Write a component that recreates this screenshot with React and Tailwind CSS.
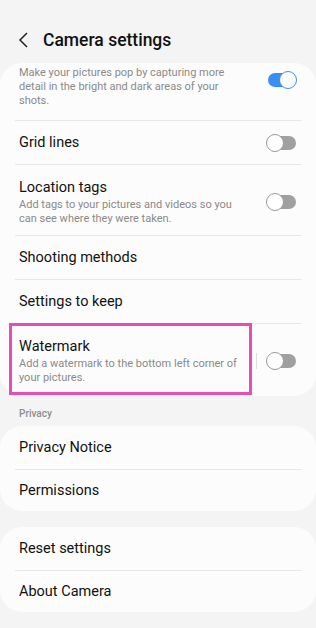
import React from 'react';

function Toggle({ on }) {
  return (
    <div className="relative h-[16px] w-[30px] shrink-0">
      <div
        className={`absolute left-[2px] right-0 top-[1px] h-[14px] rounded-full ${
          on ? 'bg-[#3b8ef5]' : 'bg-[#a0a0a0]'
        }`}
      />
      <div
        className={`absolute top-[-1px] h-[18px] w-[18px] rounded-full bg-white border-[1.5px] ${
          on ? 'right-[-1px] border-[#3b8ef5]' : 'left-0 border-[#9a9a9a]'
        }`}
      />
    </div>
  );
}

function Divider() {
  return <div className="mx-[15px] h-px bg-[#e7e7e7]" />;
}

function Row({ title, desc, toggle, sep, descPad = 'pr-[10px]', h = 'min-h-[43px]' }) {
  return (
    <div className={`flex items-center pl-[19px] pr-[20px] ${h}`}>
      <div className="flex-1">
        {title && <div className="text-[14.5px] leading-[20px] text-[#111]">{title}</div>}
        {desc && <div className={`text-[11px] leading-[14px] text-[#8a8a8a] ${descPad}`}>{desc}</div>}
      </div>
      {sep && <div className="w-px h-[16px] bg-[#dedede] mr-[9px]" />}
      {toggle !== undefined && <Toggle on={toggle} />}
    </div>
  );
}

export default function App() {
  return (
    <div className="min-h-[628px] w-[316px] bg-[#f4f4f4] font-['Roboto',sans-serif] pb-[16px]">
      {/* header */}
      <div className="flex items-center h-[63px] pt-[17px] pl-[17px]">
        <svg width="14" height="18" viewBox="0 0 14 18" className="shrink-0">
          <polyline points="10,2 3,9 10,16" fill="none" stroke="#222" strokeWidth="1.5" />
        </svg>
        <div className="ml-[12px] text-[17.5px] leading-[24px] font-medium text-[#111]">Camera settings</div>
      </div>

      <div className="bg-[#fcfcfc] rounded-[22px]">
        <div className="flex items-start pl-[19px] pr-[20px] pt-[3px] pb-[12px]">
          <div className="flex-1 text-[11px] leading-[14px] text-[#8a8a8a] pr-[30px]">
            Make your pictures pop by capturing more detail in the bright and dark areas of your shots.
          </div>
          <div className="mt-[6px]">
            <Toggle on />
          </div>
        </div>
        <Divider />
        <Row title="Grid lines" toggle={false} />
        <Divider />
        <div className="pt-[13px] pb-[9px]">
          <Row
            title="Location tags"
            desc="Add tags to your pictures and videos so you can see where they were taken."
            toggle={false}
            descPad="pr-[30px]"
            h="min-h-[42px]"
          />
        </div>
        <Divider />
        <Row title="Shooting methods" />
        <Divider />
        <Row title="Settings to keep" />
        <Divider />
        <div className="relative pt-[13px] pb-[11px]">
          <Row
            title="Watermark"
            desc="Add a watermark to the bottom left corner of your pictures."
            toggle={false}
            sep
            h="min-h-[42px]"
          />
          <div className="absolute left-[9px] top-[-1px] w-[243px] h-[72px] border-[3px] border-[#e84db6]" />
        </div>
      </div>

      <div className="pl-[19px] pt-[11px] pb-[6px] text-[10px] leading-[13px] font-medium text-[#8c8c8c]">Privacy</div>

      <div className="bg-[#fcfcfc] rounded-[22px]">
        <Row title="Privacy Notice" />
        <Divider />
        <Row title="Permissions" h="min-h-[41px]" />
      </div>

      <div className="bg-[#fcfcfc] rounded-[22px] mt-[16px]">
        <Row title="Reset settings" />
        <Divider />
        <Row title="About Camera" h="min-h-[41px]" />
      </div>
    </div>
  );
}
